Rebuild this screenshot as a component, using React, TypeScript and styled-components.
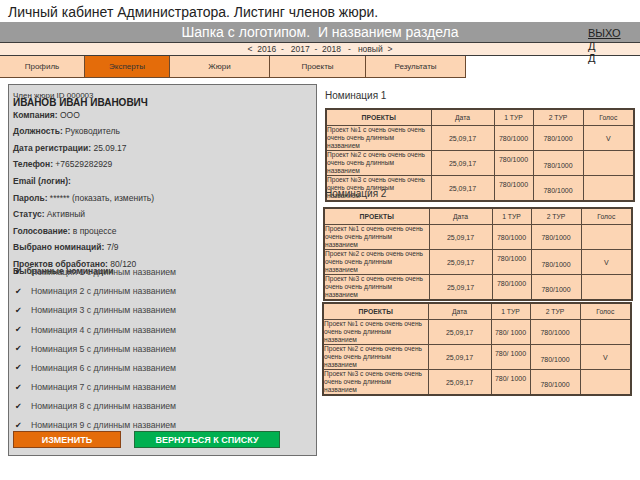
import React from "react";
import styled, { createGlobalStyle } from "styled-components";

const GlobalStyle = createGlobalStyle`
  html, body {
    margin: 0;
    padding: 0;
    background: #fff;
  }
  body {
    font-family: "Liberation Sans", Arial, sans-serif;
    color: #222;
  }
`;

const Page = styled.div`
  width: 640px;
  height: 480px;
  overflow: hidden;
`;

const PageTitle = styled.h1`
  margin: 0;
  padding: 4px 8px 0;
  height: 22px;
  box-sizing: border-box;
  font-size: 14px;
  font-weight: 400;
  line-height: 17px;
  color: #222;
  white-space: nowrap;
`;

const Header = styled.header`
  position: relative;
  height: 21px;
  box-sizing: border-box;
  background: #9b9b9b;
  border-bottom: 1px solid #3c3c3c;
  display: flex;
  align-items: center;
  justify-content: center;
  color: #fff;
  font-size: 14px;
  white-space: pre;
`;

const ExitLink = styled.a`
  position: absolute;
  left: 588px;
  top: 5px;
  z-index: 2;
  font-size: 11px;
  line-height: 12.5px;
  color: #222;
  text-decoration: underline;
`;

const YearBar = styled.div`
  height: 13px;
  box-sizing: border-box;
  background: #fde9d9;
  border-bottom: 1px solid #3c3c3c;
  font-size: 8.5px;
  line-height: 12px;
  text-align: center;
  color: #333;
  white-space: pre;
`;

const Tabs = styled.nav`
  display: flex;
  width: 466px;
  height: 22px;
`;

const Tab = styled.div<{ $w: number; $active?: boolean }>`
  flex: none;
  width: ${(p) => p.$w}px;
  box-sizing: border-box;
  background: ${(p) => (p.$active ? "#e46c0a" : "#fcd5b4")};
  border-right: 1px solid #6b4a30;
  border-bottom: 1px solid #6b4a30;
  display: flex;
  align-items: center;
  justify-content: center;
  font-size: 8px;
  color: #333;
`;

const Main = styled.main`
  display: flex;
  align-items: flex-start;
`;

const Panel = styled.section`
  margin: 6px 0 0 8px;
  width: 309px;
  height: 372px;
  box-sizing: border-box;
  background: #d9d9d9;
  border: 1px solid #6f6f6f;
  padding: 6px 0 0 4px;
  display: flex;
  flex-direction: column;
  color: #333;
`;

const IdLine = styled.div`
  font-size: 8px;
  line-height: 10px;
`;

const FullName = styled.div`
  margin-top: -4px;
  font-size: 10px;
  font-weight: 700;
  line-height: 12px;
  color: #222;
`;

const InfoList = styled.div`
  margin-top: -2.3px;
`;

const InfoRow = styled.div`
  font-size: 8.5px;
  line-height: 16.6px;
  white-space: pre;

  b {
    color: #333;
  }
`;

const SectionTitle = styled.div`
  margin-top: -8px;
  font-size: 8.5px;
  font-weight: 700;
  line-height: 12px;
`;

const NomList = styled.ul`
  margin: -14.3px 0 0;
  padding: 0;
  list-style: none;
`;

const NomItem = styled.li`
  display: flex;
  align-items: center;
  height: 19.2px;
  font-size: 8.7px;
  color: #444;
`;

const Check = styled.span`
  flex: none;
  width: 16px;
  padding-left: 2px;
  font-family: "DejaVu Sans", sans-serif;
  font-size: 8px;
  color: #222;
`;

const ButtonRow = styled.div`
  display: flex;
  gap: 13px;
  margin-top: -3.6px;
`;

const ActionButton = styled.button<{ $w: number; $green?: boolean }>`
  width: ${(p) => p.$w}px;
  height: 17px;
  box-sizing: border-box;
  padding: 0;
  background: ${(p) => (p.$green ? "#00b050" : "#e46c0a")};
  border: 1px solid ${(p) => (p.$green ? "#1f6e3a" : "#8a4416")};
  color: #fff;
  font-family: "Liberation Sans", Arial, sans-serif;
  font-size: 9px;
  font-weight: 700;
  cursor: pointer;
`;

const RightColumn = styled.div`
  margin-left: 5px;
  padding-top: 12px;
  width: 312px;
`;

const NominationTitle = styled.div<{ $overlap?: boolean }>`
  margin: ${(p) => (p.$overlap ? "-15px 0 7px 3px" : "0 0 6px 3px")};
  position: relative;
  font-size: 10px;
  line-height: 12px;
  color: #333;
`;

const Table = styled.table<{ $shift: number }>`
  margin-left: ${(p) => p.$shift}px;
  margin-bottom: 1px;
  width: 309px;
  border-collapse: collapse;
  table-layout: fixed;
  background: #fcd5b4;
  border: 2px solid #4f4236;
  color: #333;

  th,
  td {
    border: 1.5px solid #5b4b3e;
    padding: 0;
  }

  th {
    height: 15px;
    font-size: 6.8px;
    font-weight: 400;
    text-align: center;
  }

  th:first-child {
    font-weight: 700;
  }
`;

const ProjectCell = styled.td<{ $last?: boolean }>`
  height: ${(p) => (p.$last ? 23 : 24)}px;
  vertical-align: top;
  font-size: 6.6px;
  line-height: 8px;
  white-space: nowrap;
`;

const ValueCell = styled.td<{ $pos?: "top" | "mid" | "low" }>`
  text-align: center;
  font-size: 7px;
  vertical-align: ${(p) => (p.$pos === "top" ? "top" : "middle")};
  padding-top: ${(p) => (p.$pos === "top" ? "5px" : p.$pos === "low" ? "4px" : "0")} !important;
`;

type Row = { project: string[]; t1: string };

const makeRows = (t1: string): Row[] =>
  [1, 2, 3].map((n) => ({
    project: [`Проект №${n} с очень очень очень`, "очень очень длинным", "названием"],
    t1,
  }));

const nominationsTables = [
  { title: "Номинация 1", shift: 3, vote: 0, rows: makeRows("780/1000") },
  { title: "Номинация 2", shift: 1, vote: 1, rows: makeRows("780/1000") },
  { title: "", shift: 0, vote: 1, rows: makeRows("780/ 1000") },
];

const info: [string, string][] = [
  ["Компания:", " ООО"],
  ["Должность:", " Руководитель"],
  ["Дата регистрации:", " 25.09.17"],
  ["Телефон:", " +76529282929"],
  ["Email (логин):", ""],
  ["Пароль:", " ****** (показать, изменить)"],
  ["Статус:", " Активный"],
  ["Голосование:", " в процессе"],
  ["Выбрано номинаций:", " 7/9"],
  ["Проектов обработано:", " 80/120"],
];

const tabs = [
  { label: "Профиль", w: 85 },
  { label: "Эксперты", w: 85, active: true },
  { label: "Жюри", w: 100 },
  { label: "Проекты", w: 96 },
  { label: "Результаты", w: 100 },
];

export default function App() {
  return (
    <Page>
      <GlobalStyle />
      <PageTitle>Личный кабинет Администратора. Листинг членов жюри.</PageTitle>
      <Header>
        {"Шапка с логотипом.  И названием раздела"}
        <ExitLink>
          ВЫХО
          <br />Д
          <br />Д
        </ExitLink>
      </Header>
      <YearBar>{"<  2016  -   2017  -  2018   -   новый  >"}</YearBar>
      <Tabs>
        {tabs.map((t) => (
          <Tab key={t.label} $w={t.w} $active={t.active}>
            {t.label}
          </Tab>
        ))}
      </Tabs>
      <Main>
        <Panel>
          <IdLine>Член жюри ID 000003</IdLine>
          <FullName>ИВАНОВ ИВАН ИВАНОВИЧ</FullName>
          <InfoList>
            {info.map(([label, value]) => (
              <InfoRow key={label}>
                <b>{label}</b>
                {value}
              </InfoRow>
            ))}
          </InfoList>
          <SectionTitle>Выбранные номинации</SectionTitle>
          <NomList>
            {[1, 2, 3, 4, 5, 6, 7, 8, 9].map((n) => (
              <NomItem key={n}>
                <Check>✔</Check>
                Номинация {n} с длинным названием
              </NomItem>
            ))}
          </NomList>
          <ButtonRow>
            <ActionButton $w={108}>ИЗМЕНИТЬ</ActionButton>
            <ActionButton $w={146} $green>
              ВЕРНУТЬСЯ К СПИСКУ
            </ActionButton>
          </ButtonRow>
        </Panel>
        <RightColumn>
          {nominationsTables.map((tbl, ti) => (
            <React.Fragment key={ti}>
              {tbl.title && <NominationTitle $overlap={ti > 0}>{tbl.title}</NominationTitle>}
              <Table $shift={tbl.shift}>
                <colgroup>
                  <col style={{ width: 105 }} />
                  <col style={{ width: 63 }} />
                  <col style={{ width: 39 }} />
                  <col style={{ width: 50 }} />
                  <col style={{ width: 51 }} />
                </colgroup>
                <thead>
                  <tr>
                    <th>ПРОЕКТЫ</th>
                    <th>Дата</th>
                    <th>1 ТУР</th>
                    <th>2 ТУР</th>
                    <th>Голос</th>
                  </tr>
                </thead>
                <tbody>
                  {tbl.rows.map((r, ri) => (
                    <tr key={ri}>
                      <ProjectCell $last={ri === 2}>
                        {r.project.map((line, li) => (
                          <div key={li}>{line}</div>
                        ))}
                      </ProjectCell>
                      <ValueCell>25,09,17</ValueCell>
                      <ValueCell $pos={ri === 0 ? "mid" : "top"}>{r.t1}</ValueCell>
                      <ValueCell $pos={ri === 0 ? "mid" : "low"}>780/1000</ValueCell>
                      <ValueCell>{tbl.vote === ri ? "V" : ""}</ValueCell>
                    </tr>
                  ))}
                </tbody>
              </Table>
            </React.Fragment>
          ))}
        </RightColumn>
      </Main>
    </Page>
  );
}
